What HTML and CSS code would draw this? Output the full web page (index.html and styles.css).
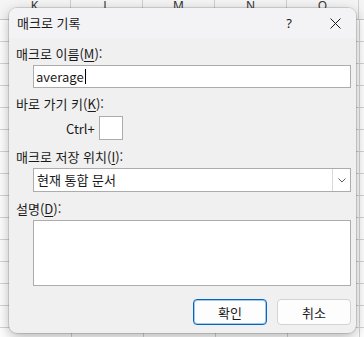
FILE: index.html
```html
<!DOCTYPE html>
<html lang="ko">
<head>
    <meta charset="UTF-8">
    <meta name="viewport" content="width=device-width, initial-scale=1.0">
    <title>매크로 기록</title>
    <link rel="stylesheet" href="styles.css">
</head>
<body>

    <div class="sheet">
        <div class="col-heads">
            <span>K</span>
            <span>L</span>
            <span>M</span>
            <span>N</span>
            <span>O</span>
        </div>

        <div class="dialog">
            <div class="titlebar">
                <span class="title">매크로 기록</span>
                <span class="tb-btn help">?</span>
                <span class="tb-btn">
                    <svg width="11" height="11" viewBox="0 0 11 11">
                        <path d="M0.5 0.5 L10.5 10.5 M10.5 0.5 L0.5 10.5" stroke="#1a1a1a" stroke-width="1" fill="none"/>
                    </svg>
                </span>
            </div>

            <div class="content">
                <div class="lbl">매크로 이름(<u>M</u>):</div>
                <div class="field name-field">average<span class="caret"></span></div>

                <div class="lbl after-field">바로 가기 키(<u>K</u>):</div>
                <div class="shortcut">
                    <span>Ctrl+</span>
                    <span class="keybox"></span>
                </div>

                <div class="lbl after-row">매크로 저장 위치(<u>I</u>):</div>
                <div class="field combo">
                    <span class="combo-text">현재 통합 문서</span>
                    <span class="combo-btn">
                        <svg width="8" height="5" viewBox="0 0 8 5">
                            <path d="M0.5 0.5 L4 4 L7.5 0.5" stroke="#5f5f5f" stroke-width="1" fill="none"/>
                        </svg>
                    </span>
                </div>

                <div class="lbl after-row">설명(<u>D</u>):</div>
                <div class="field memo"></div>

                <div class="buttons">
                    <button class="btn primary">확인</button>
                    <button class="btn">취소</button>
                </div>
            </div>
        </div>
    </div>

</body>
</html>
```

FILE: styles.css
```css
body {
    margin: 0;
    font-family: "Noto Sans CJK KR", "Noto Sans", sans-serif;
    font-size: 13px;
    color: #1a1a1a;
}
.sheet {
    position: relative;
    width: 364px;
    height: 337px;
    overflow: hidden;
    background-color: #ffffff;
    background-image:
        linear-gradient(to right, #d4d4d4 1px, transparent 1px),
        linear-gradient(to bottom, #d4d4d4 1px, transparent 1px);
    background-size: 72px 100%, 100% 22px;
    background-position: 71px 0, 0 19px;
}
.col-heads {
    display: flex;
    height: 19px;
    margin-left: -1px;
    background: #f5f5f5;
    border-bottom: 1px solid #c8c8c8;
}
.col-heads span {
    width: 71px;
    border-right: 1px solid #d0d0d0;
    text-align: center;
    font-family: "Noto Sans", sans-serif;
    font-size: 12px;
    line-height: 12px;
    color: #333;
}
.dialog {
    position: absolute;
    left: 9px;
    top: 8px;
    width: 347px;
    height: 325px;
    border-radius: 8px;
    overflow: hidden;
    background: #f0f0f0;
    box-shadow: 0 0 0 1px rgba(0, 0, 0, 0.12), 0 4px 14px rgba(0, 0, 0, 0.3);
}
.titlebar {
    display: flex;
    align-items: center;
    height: 30px;
    padding-left: 8px;
    background: #f3f3f6;
}
.title {
    flex: 1;
    line-height: 16px;
}
.tb-btn {
    display: flex;
    align-items: center;
    justify-content: center;
    width: 42px;
    height: 30px;
}
.help {
    margin-right: 4px;
    font-family: "Noto Sans", sans-serif;
    font-size: 13px;
}
.content {
    padding: 8px 5px 8px 7px;
}
.lbl {
    line-height: 16px;
}
.lbl u {
    text-underline-offset: 2px;
}
.after-field {
    margin-top: 8px;
}
.after-row {
    margin-top: 9px;
}
.field {
    box-sizing: border-box;
    margin: 3px 0 0 17px;
    background: #ffffff;
    border: 1px solid #acacac;
}
.name-field {
    display: flex;
    align-items: center;
    height: 23px;
    padding-left: 2px;
}
.caret {
    width: 1px;
    height: 15px;
    margin-left: 1px;
    background: #000;
}
.shortcut {
    display: flex;
    align-items: center;
    height: 24px;
    margin-top: 4px;
    padding-left: 50px;
}
.keybox {
    box-sizing: border-box;
    width: 24px;
    height: 24px;
    margin-left: 4px;
    background: #ffffff;
    border: 1px solid #acacac;
}
.combo {
    display: flex;
    height: 24px;
}
.combo-text {
    flex: 1;
    padding-left: 3px;
    line-height: 22px;
}
.combo-btn {
    display: flex;
    align-items: center;
    justify-content: center;
    width: 17px;
    border-left: 1px solid #d9d9d9;
}
.memo {
    height: 66px;
}
.buttons {
    display: flex;
    justify-content: flex-end;
    gap: 10px;
    margin-top: 13px;
}
.btn {
    box-sizing: border-box;
    width: 74px;
    height: 26px;
    padding: 0;
    font-family: inherit;
    font-size: 13px;
    color: #1a1a1a;
    background: #fdfdfd;
    border: 1px solid #d3d3d3;
    border-radius: 4px;
}
.primary {
    border-color: #0067c0;
    box-shadow: inset 0 0 0 1px rgba(0, 103, 192, 0.35);
}
```
